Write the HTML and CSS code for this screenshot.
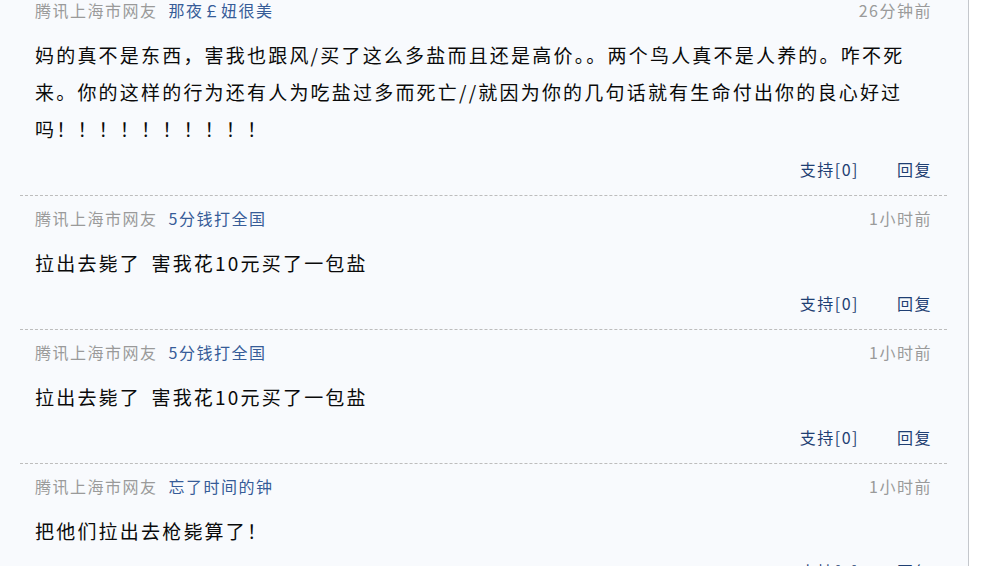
FILE: index.html
```html
<!DOCTYPE html>
<html lang="zh-CN">
<head>
  <meta charset="UTF-8">
  <title>网友评论</title>
  <link rel="stylesheet" href="styles.css">
</head>
<body>

  <div class="panel">
    <ul class="comments">
      <!-- comment -->
      <li class="comment">
        <div class="meta">
          <span class="from">腾讯上海市网友</span>
          <a class="nick" href="#">那夜￡妞很美</a>
          <span class="time">26分钟前</span>
        </div>
        <p class="text">妈的真不是东西，害我也跟风/买了这么多盐而且还是高价。。两个鸟人真不是人养的。咋不死来。你的这样的行为还有人为吃盐过多而死亡//就因为你的几句话就有生命付出你的良心好过吗！！！！！！！！！！</p>
        <div class="actions">
          <a href="#">支持[0]</a>
          <a href="#">回复</a>
        </div>
      </li>

      <li class="comment">
        <div class="meta">
          <span class="from">腾讯上海市网友</span>
          <a class="nick" href="#">5分钱打全国</a>
          <span class="time">1小时前</span>
        </div>
        <p class="text">拉出去毙了 害我花10元买了一包盐</p>
        <div class="actions">
          <a href="#">支持[0]</a>
          <a href="#">回复</a>
        </div>
      </li>

      <li class="comment">
        <div class="meta">
          <span class="from">腾讯上海市网友</span>
          <a class="nick" href="#">5分钱打全国</a>
          <span class="time">1小时前</span>
        </div>
        <p class="text">拉出去毙了 害我花10元买了一包盐</p>
        <div class="actions">
          <a href="#">支持[0]</a>
          <a href="#">回复</a>
        </div>
      </li>

      <li class="comment">
        <div class="meta">
          <span class="from">腾讯上海市网友</span>
          <a class="nick" href="#">忘了时间的钟</a>
          <span class="time">1小时前</span>
        </div>
        <p class="text">把他们拉出去枪毙算了！</p>
        <div class="actions">
          <a href="#">支持[0]</a>
          <a href="#">回复</a>
        </div>
      </li>
    </ul>
  </div>

</body>
</html>
```

FILE: styles.css
```css
:root {
  --panel-bg: #f8fafd;
  --line: #bdbdbd;
  --gray: #9a9a9a;
  --nick: #365c98;
  --link: #1f3f73;
  --text: #0a0a0a;
  --font-cjk: "Noto Sans CJK SC", "Noto Sans", sans-serif;
}
*, *::before, *::after {
  box-sizing: border-box;
  margin: 0;
  padding: 0;
}
html, body {
  height: 100%;
  overflow: hidden;
}
body {
  background: #ffffff;
  font-family: var(--font-cjk);
  color: var(--text);
}
.panel {
  width: 969px;
  min-height: 100%;
  background: var(--panel-bg);
  border-right: 1px solid #c4c7cc;
  overflow: hidden;
}
.comments {
  list-style: none;
  margin-top: -13px;
}
.comment {
  margin: 0 21px 0 20px;
  padding: 0 15px 16px 15px;
  border-top: 1px dashed var(--line);
}
.meta {
  display: flex;
  align-items: center;
  margin-top: 12px;
  height: 20px;
  line-height: 20px;
  font-size: 16px;
  letter-spacing: 1.5px;
}
.meta .from {
  color: var(--gray);
  margin-right: 11px;
}
.meta .nick {
  color: var(--nick);
  text-decoration: none;
}
.meta .time {
  margin-left: auto;
  color: var(--gray);
}
.text {
  margin-top: 16px;
  font-size: 19px;
  line-height: 37px;
  letter-spacing: 2.2px;
  word-spacing: 4px;
  padding-right: 20px;
}
.actions {
  display: flex;
  justify-content: flex-end;
  gap: 38px;
  margin-top: 12px;
  height: 20px;
  line-height: 20px;
  font-size: 16px;
  letter-spacing: 1.5px;
}
.actions a {
  color: var(--link);
  text-decoration: none;
}
```
